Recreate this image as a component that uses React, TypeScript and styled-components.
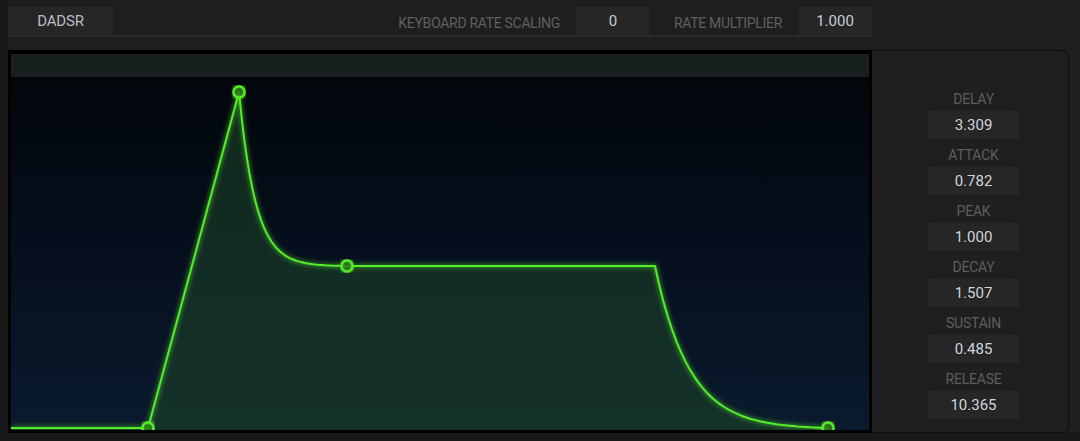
import { createGlobalStyle } from "styled-components";
import styled from "styled-components";

const GlobalStyle = createGlobalStyle`
  html, body {
    margin: 0;
    padding: 0;
    background: #181818;
    font-family: Roboto, "Liberation Sans", sans-serif;
  }
`;

const params = [
  { label: "DELAY", value: "3.309" },
  { label: "ATTACK", value: "0.782" },
  { label: "PEAK", value: "1.000" },
  { label: "DECAY", value: "1.507" },
  { label: "SUSTAIN", value: "0.485" },
  { label: "RELEASE", value: "10.365" }
];

// envelope points inside the plot (graph inner coords)
const BASE = 375;
const DELAY_X = 137;
const PEAK = { x: 228, y: 39 };
const SUS = { x: 336, y: 213 };
const SUS_END = 644;
const REL_END = 817;

const buildPath = () => {
  const pts: string[] = [];
  pts.push(`M0 ${BASE}`);
  pts.push(`L${DELAY_X} ${BASE}`);
  pts.push(`L${PEAK.x} ${PEAK.y}`);
  const steps = 40;
  for (let i = 1; i <= steps; i++) {
    const t = i / steps;
    const x = PEAK.x + (SUS.x - PEAK.x) * t;
    const k = 6.5;
    const f = (1 - Math.exp(-k * t)) / (1 - Math.exp(-k));
    const y = PEAK.y + (SUS.y - PEAK.y) * f;
    pts.push(`L${x.toFixed(1)} ${y.toFixed(1)}`);
  }
  pts.push(`L${SUS_END} ${SUS.y}`);
  for (let i = 1; i <= steps; i++) {
    const t = i / steps;
    const x = SUS_END + (REL_END - SUS_END) * t;
    const k = 5;
    const f = (1 - Math.exp(-k * t)) / (1 - Math.exp(-k));
    const y = SUS.y + (BASE - SUS.y) * f;
    pts.push(`L${x.toFixed(1)} ${y.toFixed(1)}`);
  }
  return pts.join(" ");
};

const Envelope = () => {
  const line = buildPath();
  const body = line.slice(line.indexOf(`L${PEAK.x} `));
  const fill = `M${DELAY_X} ${BASE + 3} L${DELAY_X} ${BASE} ${body} L${REL_END} ${BASE + 3} Z`;
  const handles = [
    { x: DELAY_X, y: BASE },
    { x: PEAK.x, y: PEAK.y },
    { x: SUS.x, y: SUS.y },
    { x: REL_END, y: BASE }
  ];
  return (
    <PlotSvg viewBox="0 0 858 377" width={858} height={377}>
      <defs>
        <filter id="glow" x="-10%" y="-10%" width="120%" height="120%">
          <feGaussianBlur stdDeviation="2.5" result="b" />
          <feMerge>
            <feMergeNode in="b" />
            <feMergeNode in="SourceGraphic" />
          </feMerge>
        </filter>
      </defs>
      <path d={fill} fill="rgba(30, 70, 40, 0.55)" stroke="none" />
      <path
        d={line}
        fill="none"
        stroke="#55ec2c"
        strokeWidth={2}
        strokeLinejoin="round"
        filter="url(#glow)"
      />
      {handles.map((h, i) => (
        <circle
          key={`h-${i}`}
          cx={h.x}
          cy={h.y}
          r={5.5}
          fill="rgba(40, 90, 30, 0.6)"
          stroke="#55ec2c"
          strokeWidth={2.5}
          filter="url(#glow)"
        />
      ))}
    </PlotSvg>
  );
};

const App = () => {
  return (
    <>
      <GlobalStyle />
      <Frame>
        <TopBar>
          <ModeButton>DADSR</ModeButton>
          <Spacer />
          <BarLabel>KEYBOARD RATE SCALING</BarLabel>
          <BarValue>0</BarValue>
          <BarLabel>RATE MULTIPLIER</BarLabel>
          <BarValue>1.000</BarValue>
        </TopBar>
        <Main>
          <Graph>
            <GraphHeader />
            <Plot>
              <Envelope />
            </Plot>
          </Graph>
          <Panel>
            {params.map((p) => (
              <ParamGroup key={p.label}>
                <ParamLabel>{p.label}</ParamLabel>
                <ParamValue>{p.value}</ParamValue>
              </ParamGroup>
            ))}
          </Panel>
        </Main>
      </Frame>
    </>
  );
};

const Frame = styled.div`
  margin-left: 8px;
  height: 433px;
  background: #1e1e1e;
  display: flex;
  flex-direction: column;
`;

const TopBar = styled.div`
  width: 864px;
  height: 28px;
  padding-top: 7px;
  border-bottom: 2px solid #2a2a2a;
  display: flex;
  align-items: stretch;
`;

const ModeButton = styled.div`
  width: 105px;
  background: #262626;
  color: #b9bdc4;
  font-size: 15px;
  letter-spacing: -0.2px;
  display: flex;
  align-items: center;
  justify-content: center;
`;

const Spacer = styled.div`
  flex: 1;
`;

const BarLabel = styled.div`
  color: #5f5f5f;
  font-size: 14px;
  letter-spacing: -0.3px;
  display: flex;
  align-items: center;
  padding-top: 3px;
  margin-right: 16px;
`;

const BarValue = styled.div`
  width: 74px;
  background: #262626;
  color: #c9cdd4;
  font-size: 15px;
  display: flex;
  align-items: center;
  justify-content: center;
  margin-right: 24px;

  &:last-child {
    margin-right: 0;
  }
`;

const Main = styled.div`
  margin-top: 13px;
  height: 383px;
  display: flex;
  gap: 1px;
  padding-right: 11px;
`;

const Graph = styled.div`
  width: 864px;
  background: #000;
  padding: 3px;
  box-sizing: border-box;
  display: flex;
  flex-direction: column;
`;

const GraphHeader = styled.div`
  height: 23px;
  margin-top: 1px;
  background: #18201f;
`;

const Plot = styled.div`
  flex: 1;
  background: linear-gradient(180deg, #02060b 0%, #061020 55%, #0b1a2e 100%);
  position: relative;
  overflow: hidden;
`;

const PlotSvg = styled.svg`
  display: block;
  position: absolute;
  left: 0;
  top: -24px;
`;

const Panel = styled.div`
  flex: 1;
  background: #1e1e1e;
  border: 1px solid #0e0e0e;
  border-left: none;
  border-radius: 0 7px 7px 0;
  display: flex;
  flex-direction: column;
  align-items: center;
  padding-top: 32px;
  padding-left: 6px;
`;

const ParamGroup = styled.div`
  display: flex;
  flex-direction: column;
  align-items: center;
`;

const ParamLabel = styled.div`
  width: 75px;
  height: 28px;
  box-sizing: border-box;
  padding-top: 3px;
  background: #1f1f1f;
  color: #5d5d5d;
  font-size: 14px;
  letter-spacing: -0.2px;
  display: flex;
  align-items: center;
  justify-content: center;
`;

const ParamValue = styled.div`
  width: 91px;
  height: 28px;
  background: #262626;
  color: #d0d5dc;
  font-size: 15px;
  display: flex;
  align-items: center;
  justify-content: center;
`;

export default App;
